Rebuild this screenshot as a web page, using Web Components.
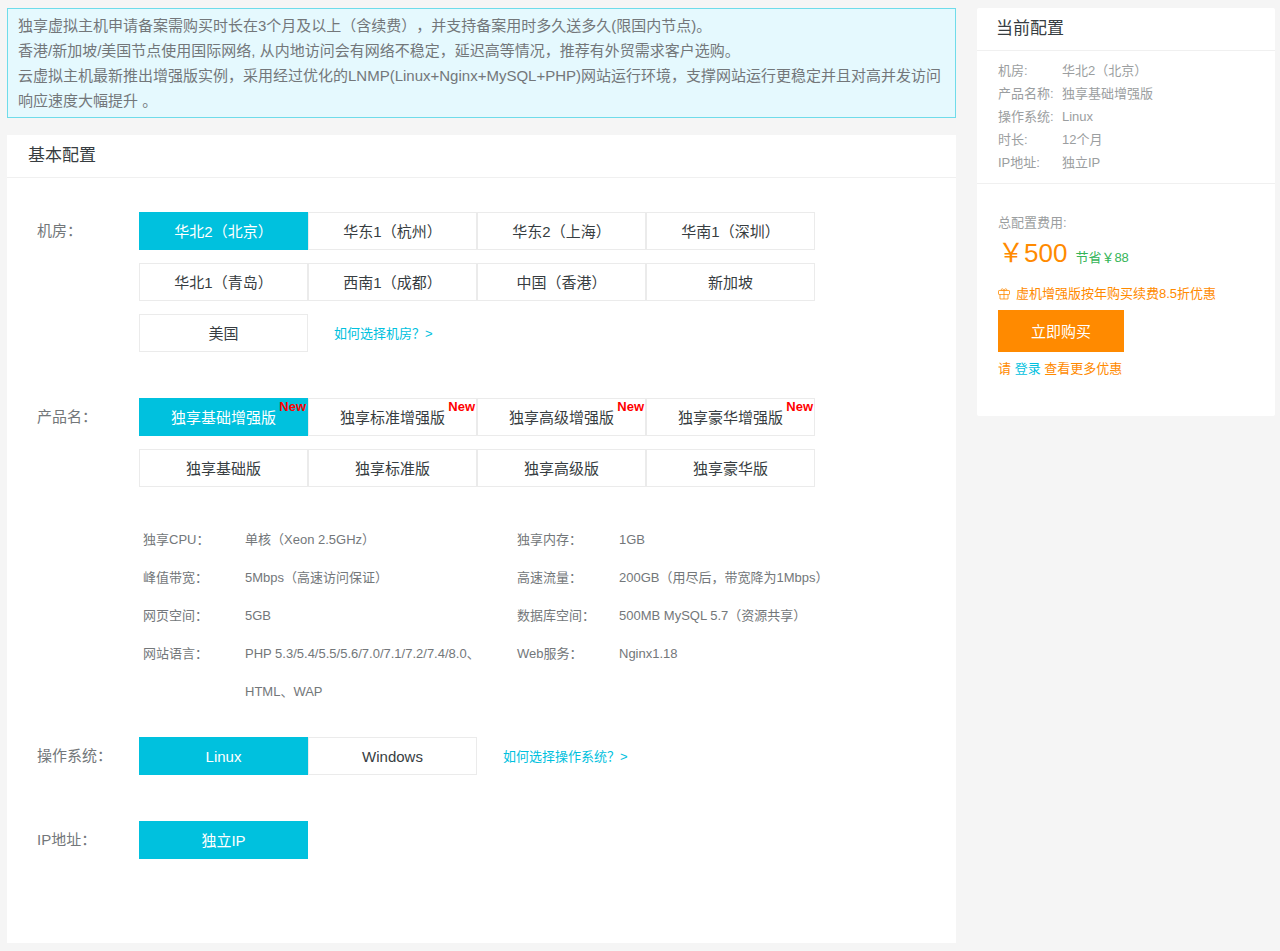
<!DOCTYPE html>
<html lang="zh-CN">
<head>
<meta charset="utf-8">
<meta name="viewport" content="width=device-width, initial-scale=1">
<title>云虚拟主机购买</title>
<style>
  body {
    margin: 0;
    background: #f5f5f5;
    color: #73777a;
    font: 15px/25px "Liberation Sans", "Noto Sans CJK SC", sans-serif;
    text-spacing-trim: space-all;
  }
</style>
</head>
<body>
<buy-page></buy-page>

<script>
  const define = (name, html, setup) => {
    const template = document.createElement('template');
    template.innerHTML = html;
    customElements.define(name, class extends HTMLElement {
      connectedCallback() {
        if (this.shadowRoot) return;
        this.attachShadow({ mode: 'open' }).append(template.content.cloneNode(true));
        if (setup) setup(this, this.shadowRoot);
      }
    });
  };

  define('notice-box', `
    <style>
      :host { display: block; padding: 4px 10px; background: #e5f9fe; border: 1px solid #6fdcea; }
      ::slotted(p) { margin: 0; }
    </style>
    <slot></slot>`);

  define('panel-card', `
    <style>
      :host { display: block; background: #fff; }
      h2 {
        margin: 0; padding: 0 var(--title-inset, 21px);
        font-size: 17px; line-height: 42px; font-weight: 400; color: #373d41;
        border-bottom: 1px solid #f0f0f0;
      }
    </style>
    <h2></h2>
    <slot></slot>`,
    (host, root) => { root.querySelector('h2').textContent = host.getAttribute('heading'); });

  define('form-row', `
    <style>
      :host { display: grid; grid-template-columns: 102px minmax(0, 1fr); align-items: start; }
      .label { line-height: 38px; }
    </style>
    <span class="label" id="label"></span>
    <div role="group" aria-labelledby="label"><slot></slot></div>`,
    (host, root) => { root.querySelector('.label').textContent = host.getAttribute('label'); });

  define('choice-list', `
    <style>
      :host { display: flex; flex-wrap: wrap; row-gap: 13px; max-width: 677px; align-items: center; }
    </style>
    <slot></slot>`,
    (host) => host.addEventListener('click', (event) => {
      const picked = event.target.closest('choice-option');
      if (!picked) return;
      for (const option of host.querySelectorAll('choice-option')) {
        option.toggleAttribute('selected', option === picked);
        option.shadowRoot.querySelector('button').setAttribute('aria-pressed', option === picked);
      }
    }));

  define('choice-option', `
    <style>
      :host { display: block; position: relative; width: 169px; }
      button {
        display: block; width: 100%; height: 38px; margin: 0; padding: 0;
        box-sizing: border-box; border: 1px solid #ebebeb; background: #fff;
        color: #373d41; font: inherit; cursor: pointer;
      }
      :host([selected]) button { background: #00c1de; border-color: #00c1de; color: #fff; }
      .badge {
        position: absolute; top: 1px; right: 2px;
        font-size: 13px; line-height: 16px; font-weight: 700; color: #f00;
      }
      .badge:empty { display: none; }
    </style>
    <button type="button"><slot></slot></button>
    <span class="badge"></span>`,
    (host, root) => {
      root.querySelector('button').setAttribute('aria-pressed', host.hasAttribute('selected'));
      root.querySelector('.badge').textContent = host.getAttribute('badge') || '';
    });

  define('help-link', `
    <style>
      :host { display: block; margin-left: 26px; font-size: 13px; }
      a { color: #00c1de; text-decoration: none; }
    </style>
    <a href="#help"><slot></slot></a>`);

  define('spec-table', `
    <style>
      :host { display: block; padding: 0 4px; font-size: 13px; line-height: 38px; }
      table { width: 100%; max-width: 748px; table-layout: fixed; border-collapse: collapse; }
      .name { width: 102px; }
      th, td { padding: 0; text-align: left; vertical-align: top; font-weight: 400; }
    </style>
    <table>
      <colgroup><col class="name"><col><col class="name"><col></colgroup>
      <tbody>
        <tr><th scope="row">独享CPU：</th><td>单核（Xeon 2.5GHz）</td><th scope="row">独享内存：</th><td>1GB</td></tr>
        <tr><th scope="row">峰值带宽：</th><td>5Mbps（高速访问保证）</td><th scope="row">高速流量：</th><td>200GB（用尽后，带宽降为1Mbps）</td></tr>
        <tr><th scope="row">网页空间：</th><td>5GB</td><th scope="row">数据库空间：</th><td>500MB MySQL 5.7（资源共享）</td></tr>
        <tr><th scope="row">网站语言：</th><td>PHP 5.3/5.4/5.5/5.6/7.0/7.1/7.2/7.4/8.0、HTML、WAP</td><th scope="row">Web服务：</th><td>Nginx1.18</td></tr>
      </tbody>
    </table>`);

  define('config-form', `
    <style>
      :host { display: flex; flex-direction: column; gap: 46px; padding: 34px 30px 84px; }
      spec-table { margin: 34px 0 -20px; }
    </style>
    <form-row label="机房：">
      <choice-list>
        <choice-option selected>华北2（北京）</choice-option>
        <choice-option>华东1（杭州）</choice-option>
        <choice-option>华东2（上海）</choice-option>
        <choice-option>华南1（深圳）</choice-option>
        <choice-option>华北1（青岛）</choice-option>
        <choice-option>西南1（成都）</choice-option>
        <choice-option>中国（香港）</choice-option>
        <choice-option>新加坡</choice-option>
        <choice-option>美国</choice-option>
        <help-link>如何选择机房？&gt;</help-link>
      </choice-list>
    </form-row>
    <form-row label="产品名：">
      <choice-list>
        <choice-option selected badge="New">独享基础增强版</choice-option>
        <choice-option badge="New">独享标准增强版</choice-option>
        <choice-option badge="New">独享高级增强版</choice-option>
        <choice-option badge="New">独享豪华增强版</choice-option>
        <choice-option>独享基础版</choice-option>
        <choice-option>独享标准版</choice-option>
        <choice-option>独享高级版</choice-option>
        <choice-option>独享豪华版</choice-option>
      </choice-list>
      <spec-table></spec-table>
    </form-row>
    <form-row label="操作系统：">
      <choice-list>
        <choice-option selected>Linux</choice-option>
        <choice-option>Windows</choice-option>
        <help-link>如何选择操作系统？&gt;</help-link>
      </choice-list>
    </form-row>
    <form-row label="IP地址：">
      <choice-list>
        <choice-option selected>独立IP</choice-option>
      </choice-list>
    </form-row>`);

  define('config-summary', `
    <style>
      :host { display: block; padding: 8px 21px 9px; border-bottom: 1px solid #f0f0f0; color: #9b9ea0; font-size: 13px; line-height: 23px; }
      dl { display: grid; grid-template-columns: 64px 1fr; margin: 0; }
      dt, dd { margin: 0; white-space: nowrap; }
    </style>
    <dl>
      <dt>机房:</dt><dd>华北2（北京）</dd>
      <dt>产品名称:</dt><dd>独享基础增强版</dd>
      <dt>操作系统:</dt><dd>Linux</dd>
      <dt>时长:</dt><dd>12个月</dd>
      <dt>IP地址:</dt><dd>独立IP</dd>
    </dl>`);

  define('order-box', `
    <style>
      :host { display: block; padding: 27px 21px 36px; font-size: 13px; line-height: 23px; color: #ff8a00; }
      p { margin: 0; }
      .caption { color: #9b9ea0; }
      .price { display: flex; align-items: baseline; gap: 8px; line-height: 38px; }
      .price strong { font-size: 26px; font-weight: 400; }
      .price span { color: #35b558; }
      .promo { display: flex; align-items: center; gap: 6px; margin: 5px 0; }
      svg { width: 12px; height: 12px; flex: none; }
      button {
        display: block; width: 126px; height: 42px; padding: 0; border: 0;
        background: #ff8a00; color: #fff; font: inherit; font-size: 15px; cursor: pointer;
      }
      .login { margin-top: 5px; }
      a { color: #00c1de; text-decoration: none; }
    </style>
    <p class="caption">总配置费用:</p>
    <p class="price"><strong>￥500</strong><span>节省￥88</span></p>
    <p class="promo">
      <svg viewBox="0 0 12 12" fill="none" stroke="currentColor" stroke-width=".8" aria-hidden="true">
        <rect x=".5" y="2.500" width="11" height="4" rx=".6"/>
        <path d="M2 6.500V11H10V6.500M6 2.500V11M6 2.500C5.600 1.300 4.900.8 4.100.8 3.100.8 3 2.200 4.200 2.500M6 2.500C6.400 1.300 7.100.8 7.900.8 8.900.8 9 2.200 7.800 2.500"/>
      </svg>
      <span>虚机增强版按年购买续费8.5折优惠</span>
    </p>
    <button type="button">立即购买</button>
    <p class="login">请 <a href="#login">登录</a> 查看更多优惠</p>`);

  define('buy-page', `
    <style>
      :host { display: flex; align-items: flex-start; gap: 21px; padding: 8px 5px 8px 7px; }
      main { flex: 1; min-width: 0; display: flex; flex-direction: column; gap: 17px; }
      aside { flex: 0 0 298px; }
      aside panel-card { --title-inset: 19px; border-radius: 2px; }
    </style>
    <main>
      <notice-box>
        <p>独享虚拟主机申请备案需购买时长在3个月及以上（含续费），并支持备案用时多久送多久(限国内节点)。</p>
        <p>香港/新加坡/美国节点使用国际网络, 从内地访问会有网络不稳定，延迟高等情况，推荐有外贸需求客户选购。</p>
        <p>云虚拟主机最新推出增强版实例，采用经过优化的LNMP(Linux+Nginx+MySQL+PHP)网站运行环境，支撑网站运行更稳定并且对高并发访问响应速度大幅提升 。</p>
      </notice-box>
      <panel-card heading="基本配置"><config-form></config-form></panel-card>
    </main>
    <aside>
      <panel-card heading="当前配置">
        <config-summary></config-summary>
        <order-box></order-box>
      </panel-card>
    </aside>`);
</script>
</body>
</html>
